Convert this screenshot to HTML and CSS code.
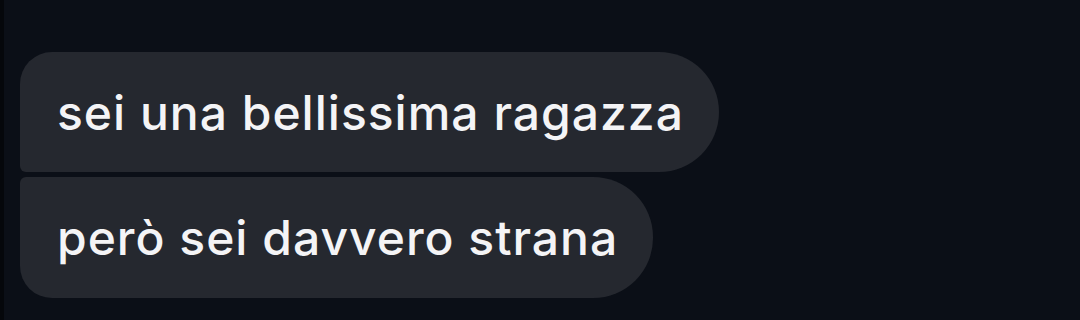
FILE: index.html
```html
<!DOCTYPE html>
<html lang="it">
<head>
    <meta charset="UTF-8">
    <meta name="viewport" content="width=device-width, initial-scale=1.0">
    <title>Messaggi</title>
    <link rel="stylesheet" href="styles.css">
</head>
<body>
    <div class="chat">
        <div class="bubble first">sei una bellissima ragazza</div>
        <div class="bubble last">però sei davvero strana</div>
    </div>
</body>
</html>
```

FILE: styles.css
```css
body {
    margin: 0;
    height: 320px;
    background-color: #0b0f17;
    border-left: 4px solid #05070b;
    font-family: Inter, 'Liberation Sans', Arial, sans-serif;
    overflow: hidden;
}

.chat {
    display: flex;
    flex-direction: column;
    align-items: flex-start;
    gap: 5px;
    padding: 52px 0 0 16px;
}

.bubble {
    display: flex;
    align-items: center;
    height: 120px;
    padding: 0 35px 0 37px;
    background-color: #25282f;
    color: #f4f4f6;
    font-size: 48px;
    font-weight: 500;
    letter-spacing: 1px;
    border-radius: 60px;
    box-sizing: border-box;
}

.first {
    border-radius: 32px 60px 60px 6px;
}

.last {
    height: 121px;
    border-radius: 6px 60px 60px 32px;
}
```
